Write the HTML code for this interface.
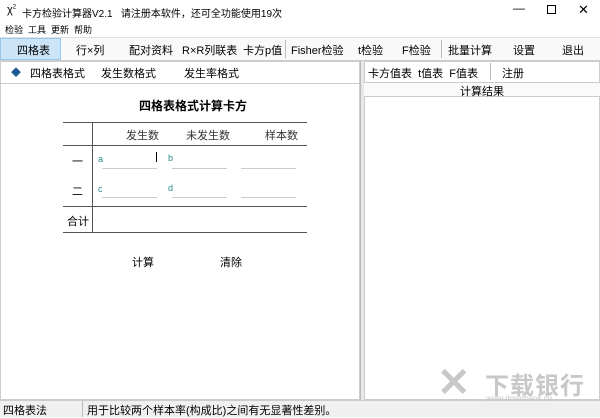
<!DOCTYPE html><html><head><meta charset="utf-8"><style>
*{margin:0;padding:0;box-sizing:border-box}
body{width:600px;height:417px;overflow:hidden;background:#fff;font-family:"Liberation Sans","Noto Sans CJK SC",sans-serif;font-size:11px;color:#000;position:relative}
.a{position:absolute;white-space:nowrap}
.l{position:absolute;background:#555}
.u{position:absolute;height:1px;background:#ccc}
.t{color:#2a8a8a}
</style></head><body>
<div class="a" style="left:0;top:0;width:600px;height:37px;background:#fff"></div>
<div class="a" style="left:7px;top:4px;font-size:11px">χ<sup style="font-size:6px">2</sup></div>
<div class="a" style="left:22px;top:5px;font-size:10px">卡方检验计算器V2.1 &nbsp;&nbsp;请注册本软件，还可全功能使用19次</div>
<div class="a" style="left:513px;top:1px;font-size:12px">—</div>
<div class="a" style="left:547px;top:5px;width:9px;height:9px;border:1px solid #000"></div>
<div class="a" style="left:578px;top:2px;font-size:13px">✕</div>
<div class="a" style="left:5px;top:23px;font-size:9px">检验 &nbsp;工具 &nbsp;更新 &nbsp;帮助</div>
<div class="a" style="left:0;top:37px;width:600px;height:24px;background:#f9f9f9;border-top:1px solid #e0e0e0;border-bottom:1px solid #ccc"></div>
<div class="a" style="left:0;top:38px;width:61px;height:22px;background:#cce4f7;border:1px solid #99c9ef"></div>
<div class="a" style="left:17px;top:42px;font-size:11px">四格表</div>
<div class="a" style="left:76px;top:42px">行×列</div>
<div class="a" style="left:129px;top:42px">配对资料</div>
<div class="a" style="left:182px;top:42px">R×R列联表</div>
<div class="a" style="left:243px;top:42px">卡方p值</div>
<div class="a" style="left:285px;top:40px;width:1px;height:18px;background:#bbb"></div>
<div class="a" style="left:291px;top:42px">Fisher检验</div>
<div class="a" style="left:358px;top:42px">t检验</div>
<div class="a" style="left:402px;top:42px">F检验</div>
<div class="a" style="left:441px;top:40px;width:1px;height:18px;background:#bbb"></div>
<div class="a" style="left:448px;top:42px">批量计算</div>
<div class="a" style="left:513px;top:42px">设置</div>
<div class="a" style="left:562px;top:42px">退出</div>
<div class="a" style="left:0;top:61px;width:360px;height:339px;border:1px solid #ccc"></div>
<div class="a" style="left:0;top:61px;width:360px;height:23px;border-bottom:1px solid #ccc"></div>
<div class="a" style="left:11px;top:64px;color:#1e5a9a;font-size:10px">◆</div>
<div class="a" style="left:30px;top:65px">四格表格式</div>
<div class="a" style="left:101px;top:65px">发生数格式</div>
<div class="a" style="left:184px;top:65px">发生率格式</div>
<div class="a" style="left:360px;top:61px;width:4px;height:339px;background:#e8e8e8;border-left:1px solid #bbb"></div>
<div class="a" style="left:364px;top:61px;width:236px;height:339px;border:1px solid #ccc"></div>
<div class="a" style="left:368px;top:65px">卡方值表 &nbsp;t值表 &nbsp;F值表</div>
<div class="a" style="left:490px;top:63px;width:1px;height:17px;background:#bbb"></div>
<div class="a" style="left:502px;top:65px">注册</div>
<div class="a" style="left:364px;top:82px;width:236px;height:15px;border-top:1px solid #ccc;border-bottom:1px solid #ccc;background:#fafafa"></div>
<div class="a" style="left:460px;top:83px">计算结果</div>
<div class="a" style="left:139px;top:97px;font-weight:bold;font-size:12px">四格表格式计算卡方</div>
<div class="l" style="left:63px;top:122px;width:244px;height:1px"></div>
<div class="l" style="left:63px;top:145px;width:244px;height:1px"></div>
<div class="l" style="left:63px;top:206px;width:244px;height:1px"></div>
<div class="l" style="left:63px;top:232px;width:244px;height:1px"></div>
<div class="l" style="left:92px;top:122px;width:1px;height:110px"></div>
<div class="a" style="left:126px;top:127px;color:#333">发生数</div>
<div class="a" style="left:186px;top:127px;color:#333">未发生数</div>
<div class="a" style="left:265px;top:127px;color:#333">样本数</div>
<div class="a" style="left:72px;top:153px">一</div>
<div class="a" style="left:72px;top:183px">二</div>
<div class="a" style="left:67px;top:213px">合计</div>
<div class="a t" style="left:98px;top:154px;font-size:9px">a</div>
<div class="a t" style="left:168px;top:153px;font-size:9px">b</div>
<div class="a t" style="left:98px;top:184px;font-size:9px">c</div>
<div class="a t" style="left:168px;top:183px;font-size:9px">d</div>
<div class="a" style="left:156px;top:152px;width:1px;height:10px;background:#000"></div>
<div class="u" style="left:102px;top:168px;width:55px"></div>
<div class="u" style="left:172px;top:168px;width:55px"></div>
<div class="u" style="left:241px;top:168px;width:55px"></div>
<div class="u" style="left:102px;top:197px;width:55px"></div>
<div class="u" style="left:172px;top:197px;width:55px"></div>
<div class="u" style="left:241px;top:197px;width:55px"></div>
<div class="a" style="left:132px;top:254px">计算</div>
<div class="a" style="left:220px;top:254px">清除</div>
<div class="a" style="left:0;top:400px;width:600px;height:17px;background:#f0f0f0;border-top:1px solid #ccc"></div>
<div class="a" style="left:3px;top:402px">四格表法</div>
<div class="a" style="left:82px;top:401px;width:1px;height:16px;background:#bbb"></div>
<div class="a" style="left:87px;top:402px">用于比较两个样本率(构成比)之间有无显著性差别。</div>
<div class="a" style="left:485px;top:366px;font-size:24px;font-weight:bold;color:#c8c8c8;letter-spacing:1px">下载银行</div>
<div class="a" style="left:437px;top:360px;font-size:40px;font-weight:bold;color:#c8c8c8">✕</div>
<div class="a" style="left:486px;top:394px;font-size:8px;color:#c8c8c8">www.downbank.cn</div>
</body></html>
